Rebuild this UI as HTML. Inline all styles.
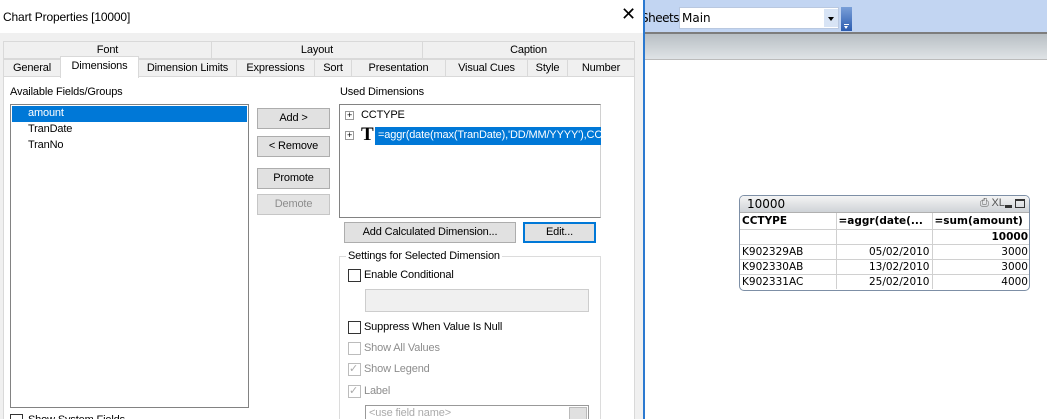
<!DOCTYPE html>
<html style="overflow:hidden;width:1047px;height:419px"><head><meta charset="utf-8"><style>
*{margin:0;padding:0;box-sizing:border-box}
body{width:1047px;height:419px;overflow:hidden;position:relative;background:#fff;font-family:"Liberation Sans",sans-serif;font-size:11px;letter-spacing:-0.15px;color:#000}
.a{position:absolute}
.tab{position:absolute;height:18px;border:1px solid #d9d9d9;background:#f0f0f0;text-align:center;line-height:16px;font-size:11px}
.btn{position:absolute;background:#e1e1e1;border:1px solid #adadad;text-align:center;line-height:19px;font-size:11px}
.cb{position:absolute;width:13px;height:13px;border:1px solid #333;background:#fff}
.cbd{border-color:#bcbcbc}
.t{position:absolute;font-size:11px;white-space:nowrap}
.g{color:#8d8d8d}
.q td{border-right:1px solid #d0d0d0;border-bottom:1px solid #d0d0d0;height:15px;padding:0 2px;font-family:"DejaVu Sans",sans-serif;font-size:10.5px;letter-spacing:0;white-space:nowrap;overflow:hidden}
</style></head><body>
<div class="a" style="left:644px;top:0;width:403px;height:33px;background:#c2d5f2"></div>
<div class="a" style="left:644px;top:32px;width:403px;height:2px;background:#7d7d7d"></div>
<div class="a" style="left:644px;top:34px;width:403px;height:25px;background:linear-gradient(#b8bfc4,#dfe3e6)"></div>
<div class="a" style="left:644px;top:59px;width:403px;height:1px;background:#bbb"></div>
<div class="t" style="left:641px;top:11px;font-family:'DejaVu Sans',sans-serif;font-size:12px;letter-spacing:-0.5px">Sheets</div>
<div class="a" style="left:679px;top:7px;width:160px;height:22px;background:#fff;border:1px solid #b9c8e0"></div>
<div class="t" style="left:682px;top:11px;font-family:'DejaVu Sans',sans-serif;font-size:12px;letter-spacing:0">Main</div>
<div class="a" style="left:824px;top:9px;width:14px;height:18px;background:#d8e4f5"></div>
<div class="a" style="left:828px;top:17px;border:3px solid transparent;border-top:4px solid #000"></div>
<div class="a" style="left:841px;top:7px;width:11px;height:24px;background:linear-gradient(#7a9fd8,#2b5cb0)"></div>
<div class="a" style="left:844px;top:24px;width:5px;height:1px;background:#fff"></div>
<div class="a" style="left:844px;top:26px;border:2.5px solid transparent;border-top:3px solid #fff"></div>

<div class="a" style="left:739px;top:195px;width:291px;height:96px;border:1px solid #7d8fa6;border-radius:5px;background:#fff;overflow:hidden">
 <div style="height:17px;background:linear-gradient(#f4f4f4,#cfd3d7);border-bottom:1px solid #b0b0b0;position:relative">
  <span style="position:absolute;left:7px;top:1px;font-family:'DejaVu Sans',sans-serif;font-size:12px;letter-spacing:0">10000</span>
  <span style="position:absolute;left:240px;top:1px;font-size:11px;color:#555">⎙ XL</span>
  <span style="position:absolute;left:265px;top:9px;width:7px;height:3px;background:#333"></span>
  <span style="position:absolute;left:275px;top:3px;width:10px;height:9px;border:1px solid #333;border-top-width:2px"></span>
 </div>
 <table class="q" style="border-collapse:collapse;width:290px;table-layout:fixed">
  <colgroup><col style="width:96px"><col style="width:96px"><col style="width:98px"></colgroup>
  <tr><td style="font-weight:bold;height:16px">CCTYPE</td><td style="font-weight:bold">=aggr(date(...</td><td style="font-weight:bold;border-right:none">=sum(amount)</td></tr>
  <tr><td></td><td></td><td style="text-align:right;font-weight:bold;border-right:none">10000</td></tr>
  <tr><td>K902329AB</td><td style="text-align:right">05/02/2010</td><td style="text-align:right;border-right:none">3000</td></tr>
  <tr><td>K902330AB</td><td style="text-align:right">13/02/2010</td><td style="text-align:right;border-right:none">3000</td></tr>
  <tr><td style="border-bottom:none">K902331AC</td><td style="text-align:right;border-bottom:none">25/02/2010</td><td style="text-align:right;border:none">4000</td></tr>
 </table>
</div>

<div class="a" style="left:0;top:0;width:645px;height:419px;background:#f0f0f0;border-right:2px solid #2b79d0;overflow:hidden">
<div class="a" style="left:0;top:0;width:643px;height:33px;background:#fff"></div>
<div class="t" style="left:3px;top:10px;font-size:12px">Chart Properties [10000]</div>
<div class="t" style="left:621px;top:4px;font-size:18px">✕</div>

<div class="tab" style="left:3px;top:41px;width:209px">Font</div>
<div class="tab" style="left:211px;top:41px;width:212px">Layout</div>
<div class="tab" style="left:422px;top:41px;width:213px">Caption</div>
<div class="tab" style="left:3px;top:59px;width:58px">General</div>
<div class="tab" style="left:138px;top:59px;width:99px">Dimension Limits</div>
<div class="tab" style="left:236px;top:59px;width:79px">Expressions</div>
<div class="tab" style="left:314px;top:59px;width:38px">Sort</div>
<div class="tab" style="left:351px;top:59px;width:95px">Presentation</div>
<div class="tab" style="left:445px;top:59px;width:83px">Visual Cues</div>
<div class="tab" style="left:527px;top:59px;width:41px">Style</div>
<div class="tab" style="left:567px;top:59px;width:68px">Number</div>
<div class="a" style="left:3px;top:76px;width:632px;height:350px;background:#fff;border:1px solid #d9d9d9"></div>
<div class="tab" style="left:60px;top:56px;width:79px;height:22px;background:#fff;border-bottom:none;line-height:19px">Dimensions</div>

<div class="t" style="left:10px;top:86px">Available Fields/Groups</div>
<div class="a" style="left:10px;top:104px;width:239px;height:304px;border:1px solid #828282;background:#fff"></div>
<div class="a" style="left:12px;top:106px;width:235px;height:16px;background:#0078d7"></div>
<div class="t" style="left:28px;top:107px;color:#fff">amount</div>
<div class="t" style="left:28px;top:123px">TranDate</div>
<div class="t" style="left:28px;top:139px">TranNo</div>
<div class="cb" style="left:10px;top:414px"></div>
<div class="t" style="left:28px;top:414px">Show System Fields</div>

<div class="btn" style="left:257px;top:108px;width:73px">Add &gt;</div>
<div class="btn" style="left:257px;top:136px;width:73px">&lt; Remove</div>
<div class="btn" style="left:257px;top:168px;width:73px">Promote</div>
<div class="btn g" style="left:257px;top:194px;width:73px;border-color:#c6c6c6;background:#e4e4e4;color:#8d8d8d">Demote</div>

<div class="t" style="left:340px;top:86px">Used Dimensions</div>
<div class="a" style="left:339px;top:104px;width:262px;height:114px;border:1px solid #828282;border-right:1px solid #d0d0d0;background:#fff"></div>
<div class="a" style="left:345px;top:111px;width:9px;height:9px;border:1px solid #999;font-size:9px;line-height:7px;text-align:center">+</div>
<div class="t" style="left:361px;top:109px">CCTYPE</div>
<div class="a" style="left:345px;top:131px;width:9px;height:9px;border:1px solid #999;font-size:9px;line-height:7px;text-align:center">+</div>
<div class="t" style="left:361px;top:124px;font-family:'Liberation Serif',serif;font-weight:bold;font-size:19px">T</div>
<div class="a" style="left:375px;top:127px;width:226px;height:18px;background:#0078d7;overflow:hidden"><span style="color:#fff;position:absolute;left:3px;top:2px;white-space:nowrap">=aggr(date(max(TranDate),'DD/MM/YYYY'),CC</span></div>

<div class="btn" style="left:344px;top:222px;width:172px">Add Calculated Dimension...</div>
<div class="btn" style="left:523px;top:222px;width:73px;border:2px solid #0078d7;line-height:17px">Edit...</div>

<div class="a" style="left:339px;top:256px;width:262px;height:170px;border:1px solid #dcdcdc"></div>
<div class="t" style="left:346px;top:250px;background:#fff;padding:0 2px">Settings for Selected Dimension</div>
<div class="cb" style="left:348px;top:269px"></div>
<div class="t" style="left:364px;top:269px">Enable Conditional</div>
<div class="a" style="left:365px;top:289px;width:224px;height:23px;background:#f0f0f0;border:1px solid #cdcdcd"></div>
<div class="cb" style="left:348px;top:321px"></div>
<div class="t" style="left:364px;top:321px">Suppress When Value Is Null</div>
<div class="cb cbd" style="left:348px;top:342px"></div>
<div class="t g" style="left:364px;top:342px">Show All Values</div>
<div class="cb cbd" style="left:348px;top:363px;color:#aaa;font-size:11px;line-height:11px">✓</div>
<div class="t g" style="left:364px;top:363px">Show Legend</div>
<div class="cb cbd" style="left:348px;top:385px;color:#aaa;font-size:11px;line-height:11px">✓</div>
<div class="t g" style="left:364px;top:385px">Label</div>
<div class="a" style="left:365px;top:405px;width:224px;height:20px;border:1px solid #999;background:#fff"></div>
<div class="t" style="left:369px;top:407px;color:#aaa">&lt;use field name&gt;</div>
<div class="a" style="left:569px;top:407px;width:18px;height:14px;background:#e0e0e0;border:1px solid #bbb"></div>
</div>
</body></html>
